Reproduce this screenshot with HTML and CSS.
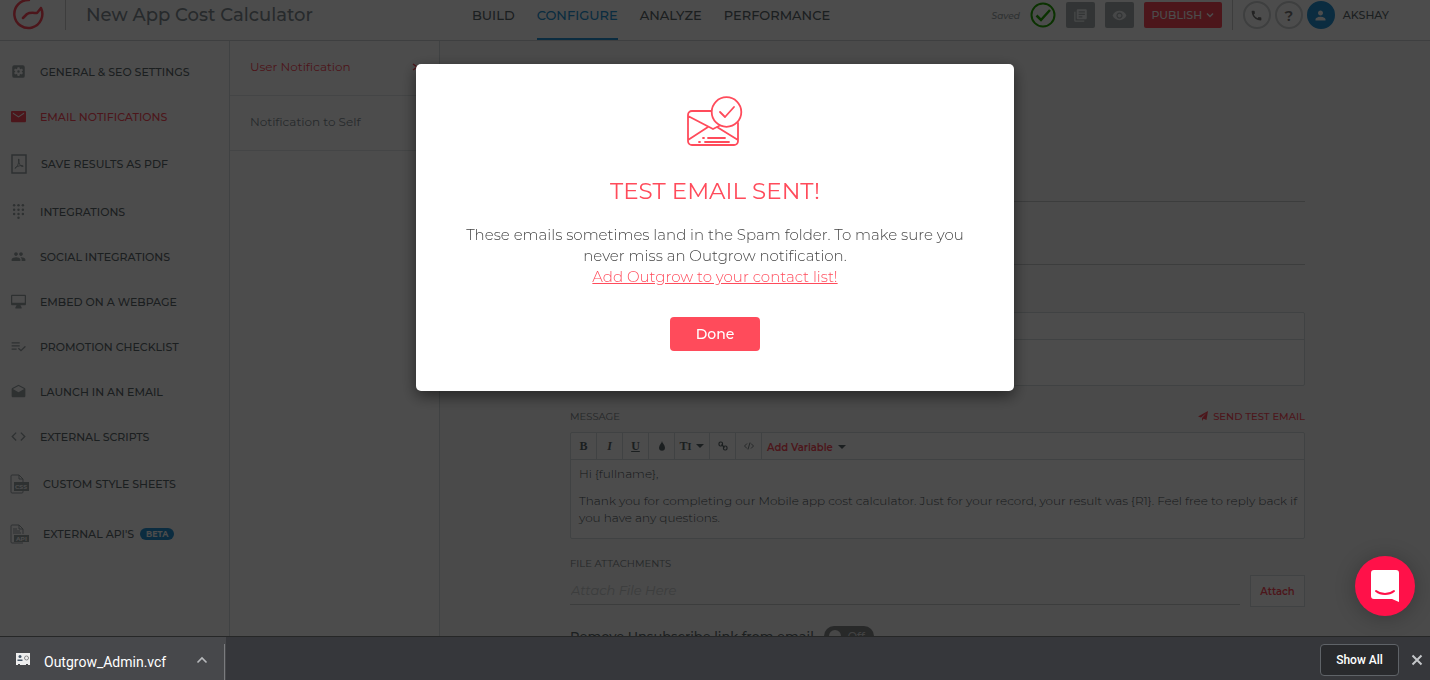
FILE: index.html
```html
<!DOCTYPE html>
<html lang="en">
<head>
  <meta charset="UTF-8">
  <title>New App Cost Calculator</title>
  <meta name="viewport" content="width=device-width, initial-scale=1">
  <link rel="stylesheet" href="styles.css">
</head>
<body>
  <div class="app">
    <header class="header">
      <div class="brand">
        <svg class="logo" viewBox="0 0 32 32" fill="none" stroke="#ff4b5b" stroke-width="2.500" stroke-linecap="round" stroke-linejoin="round">
          <path d="M16 1A14 14 0 1 0 28 9L24 14C21 14 17 13 14 15L10 19"/>
        </svg>
        <span class="project-name">New App Cost Calculator</span>
      </div>
      <nav class="tabs">
        <a href="#">BUILD</a>
        <a href="#" class="active">CONFIGURE</a>
        <a href="#">ANALYZE</a>
        <a href="#">PERFORMANCE</a>
      </nav>
      <div class="actions">
        <span class="saved">Saved</span>
        <svg class="saved-check" viewBox="0 0 26 26" fill="none" stroke="#26a806" stroke-width="2">
          <circle cx="13" cy="13" r="11.5"/>
          <path d="M6.500 13.500l4.500 4.500 9-10" stroke-width="2.500"/>
        </svg>
        <button class="square-btn" aria-label="Copy">
          <svg viewBox="0 0 24 24"><path d="M4 6H2v14c0 1.100.9 2 2 2h14v-2H4V6zm16-4H8c-1.100 0-2 .9-2 2v12c0 1.100.9 2 2 2h12c1.100 0 2-.9 2-2V4c0-1.100-.9-2-2-2zm-1 9H9V9h10v2zm-4 4H9v-2h6v2zm4-8H9V5h10v2z"/></svg>
        </button>
        <button class="square-btn" aria-label="Preview">
          <svg viewBox="0 0 24 24"><path d="M12 4.500C7 4.500 2.730 7.610 1 12c1.730 4.390 6 7.500 11 7.500s9.270-3.110 11-7.500c-1.730-4.390-6-7.500-11-7.500zM12 17c-2.760 0-5-2.240-5-5s2.240-5 5-5 5 2.240 5 5-2.240 5-5 5zm0-8c-1.660 0-3 1.340-3 3s1.340 3 3 3 3-1.340 3-3-1.340-3-3-3z"/></svg>
        </button>
        <button class="publish-btn">PUBLISH
          <svg viewBox="0 0 8 8" fill="none" stroke="currentColor" stroke-width="1.500"><path d="M1 2.500l3 3 3-3"/></svg>
        </button>
        <span class="divider"></span>
        <button class="round-btn" aria-label="Call">
          <svg viewBox="0 0 24 24"><path d="M20 15.400c-1.200 0-2.400-.2-3.500-.6-.4-.1-.7 0-1 .2L13.900 17c-2.800-1.300-5.500-3.900-6.900-6.800l2-1.700c.2-.2.300-.6.200-1C8.800 6.400 8.600 5.200 8.600 4c0-.5-.4-1-1-1H4.200C3.600 3 3 3.200 3 4c0 9.300 7.700 17 17 17 .7 0 1-.6 1-1.200v-3.400c0-.6-.4-1-1-1z"/></svg>
        </button>
        <button class="round-btn">?</button>
        <span class="avatar">
          <svg viewBox="0 0 24 24"><path d="M12 12c2.210 0 4-1.790 4-4s-1.790-4-4-4-4 1.790-4 4 1.790 4 4 4zm0 2c-2.670 0-8 1.340-8 4v2h16v-2c0-2.660-5.330-4-8-4z"/></svg>
        </span>
        <span class="user-name">AKSHAY</span>
      </div>
    </header>

    <div class="main">
      <nav class="sidebar">
        <a href="#" class="menu-item">
          <svg viewBox="0 0 24 24"><path fill-rule="evenodd" d="M5 2h14a3 3 0 0 1 3 3v14a3 3 0 0 1-3 3H5a3 3 0 0 1-3-3V5a3 3 0 0 1 3-3zm5.500 3l-.4 2.300-1.500.9-2.200-.9-1.600 2.700 1.900 1.400v1.300l-1.900 1.400 1.600 2.700 2.200-.9 1.500.9.400 2.300h3l.4-2.300 1.500-.9 2.200.9 1.600-2.700-1.900-1.400v-1.300l1.900-1.400-1.600-2.700-2.200.9-1.500-.9-.4-2.300zM12 10a2 2 0 1 1 0 4 2 2 0 0 1 0-4z"/></svg>
          <span>GENERAL &amp; SEO SETTINGS</span>
        </a>
        <a href="#" class="menu-item active">
          <svg viewBox="0 0 24 24"><path d="M22 3H2C.9 3 0 3.900 0 5v14c0 1.100.9 2 2 2h20c1.100 0 2-.9 2-2V5c0-1.100-.9-2-2-2zm-1 4.500l-9 6-9-6V5.500l9 6 9-6z"/></svg>
          <span>EMAIL NOTIFICATIONS</span>
        </a>
        <a href="#" class="menu-item tall">
          <svg class="doc" viewBox="0 0 16 20"><path class="outline" d="M1 1h14v18H1z" stroke-width="1.500"/><path class="outline" d="M7.500 5c1.500 0 0 4.500-1 6.500S3.500 15 4 14s4-2.500 7-2.500c2 0 1.500 1.500 0 1S8 9.500 7.500 7V5z"/></svg>
          <span>SAVE RESULTS AS PDF</span>
        </a>
        <a href="#" class="menu-item">
          <svg viewBox="0 0 24 24"><g><circle cx="5" cy="2" r="2"/><circle cx="12" cy="2" r="2"/><circle cx="19" cy="2" r="2"/><circle cx="5" cy="9" r="2"/><circle cx="12" cy="9" r="2"/><circle cx="19" cy="9" r="2"/><circle cx="5" cy="16" r="2"/><circle cx="12" cy="16" r="2"/><circle cx="19" cy="16" r="2"/><circle cx="12" cy="22" r="2"/></g></svg>
          <span>INTEGRATIONS</span>
        </a>
        <a href="#" class="menu-item">
          <svg viewBox="0 0 24 24"><path d="M16 11c1.660 0 3-1.340 3-3s-1.340-3-3-3-3 1.340-3 3 1.340 3 3 3zm-8 0c1.660 0 3-1.340 3-3S9.660 5 8 5 5 6.340 5 8s1.340 3 3 3zm0 2c-2.330 0-7 1.170-7 3.500V19h14v-2.500c0-2.330-4.670-3.500-7-3.500zm8 0c-.3 0-.6 0-1 .1 1.200.8 2 1.900 2 3.400V19h6v-2.500c0-2.330-4.670-3.500-7-3.500z"/></svg>
          <span>SOCIAL INTEGRATIONS</span>
        </a>
        <a href="#" class="menu-item">
          <svg viewBox="0 0 24 24"><path fill-rule="evenodd" d="M22 1H2C.9 1 0 1.900 0 3v13c0 1.100.9 2 2 2h7l-2 3v2h10v-2l-2-3h7c1.100 0 2-.9 2-2V3c0-1.100-.9-2-2-2zm0 13H2V3h20z"/></svg>
          <span>EMBED ON A WEBPAGE</span>
        </a>
        <a href="#" class="menu-item">
          <svg viewBox="0 0 24 24"><path d="M14 10H1v2h13v-2zm0-5H1v2h13V5zM1 17h8v-2H1v2zm21-6l2 1.500-8 7.500-5-4.500 1.500-1.500 3.500 3z"/></svg>
          <span>PROMOTION CHECKLIST</span>
        </a>
        <a href="#" class="menu-item">
          <svg viewBox="0 0 24 24"><path fill-rule="evenodd" d="M23 8c0-.7-.4-1.400-1-1.700L12 1 2 6.300C1.400 6.700 1 7.300 1 8v11c0 1.100.9 2 2 2h18c1.100 0 2-.9 2-2zM12 13L3 8l9-5 9 5z"/></svg>
          <span>LAUNCH IN AN EMAIL</span>
        </a>
        <a href="#" class="menu-item">
          <svg viewBox="0 0 24 24"><path d="M9 17.500L3.500 12 9 6.500 7.500 5l-7 7 7 7zM15 17.500l5.500-5.500L15 6.500 16.500 5l7 7-7 7z"/></svg>
          <span>EXTERNAL SCRIPTS</span>
        </a>
        <a href="#" class="menu-item tall file">
          <svg viewBox="0 0 19 20"><path class="outline" d="M13 5v13a1 1 0 0 1-1 1H2a1 1 0 0 1-1-1V2a1 1 0 0 1 1-1h7l4 4H9V1"/><path d="M4 8h15v9H4z"/><text x="5" y="15" class="tag">CSS</text></svg>
          <span>CUSTOM STYLE SHEETS</span>
        </a>
        <a href="#" class="menu-item tall file">
          <svg viewBox="0 0 19 20"><path class="outline" d="M13 10V5L9 1H2a1 1 0 0 0-1 1v16a1 1 0 0 0 1 1h11M9 1v4h4M3 5h4M3 7h7M3 9h8"/><path d="M4 11h15v7H4z"/><text x="6" y="17" class="tag">API</text></svg>
          <span>EXTERNAL API'S</span>
          <span class="badge">BETA</span>
        </a>
      </nav>

      <nav class="submenu">
        <a href="#" class="active">User Notification
          <svg viewBox="0 0 8 8" fill="none" stroke="currentColor" stroke-width="1.500"><path d="M2 1l4 3-4 3"/></svg>
        </a>
        <a href="#">Notification to Self</a>
      </nav>

      <main class="content">
        <input class="line-input" type="text" aria-label="Name">
        <input class="line-input second" type="text" aria-label="Email">
        <div class="editor subject">
          <div class="toolbar"></div>
          <div class="editor-body"></div>
        </div>

        <div class="label-row">
          <span class="label">MESSAGE</span>
          <a href="#" class="send-test">
            <svg viewBox="0 0 10 10"><path d="M10 0L8.500 9 5.500 7.700 4 10V7L8.500 2 3 6.500 0 5.500z"/></svg>
            SEND TEST EMAIL
          </a>
        </div>
        <div class="editor">
          <div class="toolbar">
            <button class="serif bold">B</button>
            <button class="serif italic">I</button>
            <button class="serif underline">U</button>
            <button aria-label="Text color"><svg viewBox="0 0 10 10"><path d="M5 0C5 2 8 4 8 6.800A3 3 0 0 1 2 6.800C2 4 5 2 5 0z"/></svg></button>
            <button class="serif size">T<small>I</small><i class="caret"></i></button>
            <button aria-label="Link"><svg viewBox="0 0 10 10" fill="none" stroke="#5d686c" stroke-width="1.200"><rect x="1" y="1" width="3.5" height="4" rx="1.500"/><rect x="5.5" y="5" width="3.5" height="4" rx="1.500"/><path d="M3.500 3.500l3 3"/></svg></button>
            <button aria-label="Code"><svg viewBox="0 0 10 10" fill="none" stroke="#5d686c" stroke-width=".8"><path d="M3 2.500L.5 5 3 7.500M7 2.500L9.500 5 7 7.500M6 1.500l-2 7"/></svg></button>
            <button class="variable">Add Variable <i class="caret"></i></button>
          </div>
          <div class="editor-body">
            <p>Hi {fullname},</p>
            <p>Thank you for completing our Mobile app cost calculator. Just for your record, your result was {R1}. Feel free to reply back if you have any questions.</p>
          </div>
        </div>

        <label class="label file-label" for="attachment">FILE ATTACHMENTS</label>
        <div class="attach-row">
          <input id="attachment" type="text" placeholder="Attach File Here">
          <button class="attach-btn">Attach</button>
        </div>
        <label class="unsubscribe">
          <span>Remove Unsubscribe link from email</span>
          <input type="checkbox">
          <span class="toggle"><i></i>Off</span>
        </label>
      </main>
    </div>
  </div>

  <div class="overlay">
    <div class="modal" role="dialog" aria-labelledby="modalTitle">
      <svg class="modal-icon" viewBox="0 0 56 51" fill="none" stroke="#ff4b5b" stroke-width="1.800" stroke-linecap="round" stroke-linejoin="round">
        <path d="M24 15H5a4 4 0 0 0-4 4v26a4 4 0 0 0 4 4h42a4 4 0 0 0 4-4V27M1 20l25 13 6-3M1 44l20-13M51 44L30 31"/>
        <circle cx="39.500" cy="16" r="14.800"/>
        <path d="M33 16l5 5 9-10M16 42h1M21 42h17M12 46h1M18 46h24"/>
      </svg>
      <h1 id="modalTitle">TEST EMAIL SENT!</h1>
      <p>These emails sometimes land in the Spam folder. To make sure you<br>never miss an Outgrow notification.<br><a href="#">Add Outgrow to your contact list!</a></p>
      <button class="done-btn">Done</button>
    </div>
  </div>

  <button class="launcher" aria-label="Open chat">
    <svg viewBox="0 0 28 32"><path d="M3 0h22a3 3 0 0 1 3 3v29l-7-3H3a3 3 0 0 1-3-3V3a3 3 0 0 1 3-3z" fill="#fff"/><path d="M5 21c5 4 13 4 18 0" fill="none" stroke="#ff1149" stroke-width="2" stroke-linecap="round"/></svg>
  </button>

  <footer class="downloads">
    <div class="download-item">
      <svg class="vcf" viewBox="0 0 14 12"><path d="M0 0h14v12h-2v-1h-2v1H4v-1H2v1H0z" fill="#eee"/><circle cx="4" cy="3.500" r="1.500" fill="#456"/><path d="M1.500 8V6.500h5V8z" fill="#456"/><circle cx="10.500" cy="5" r="2" fill="none" stroke="#888"/></svg>
      <span>Outgrow_Admin.vcf</span>
      <button aria-label="More"><svg viewBox="0 0 12 12" fill="none" stroke="#b8babd" stroke-width="1.600"><path d="M1.500 8.500L6 4l4.500 4.500"/></svg></button>
    </div>
    <button class="show-all">Show All</button>
    <button class="close" aria-label="Close"><svg viewBox="0 0 12 12" fill="none" stroke="#c4c6c9" stroke-width="2"><path d="M1.500 1.500l9 9M10.500 1.500l-9 9"/></svg></button>
  </footer>
</body>
</html>
```
FILE: styles.css
```css
:root {
  --primary: #ff4b5b;
  --blue: #2593d5;
  --text: #5d686c;
  --icon: #9aa3a6;
  --border: #d5dddf;
}
* {
  box-sizing: border-box;
}
body {
  margin: 0;
  font-family: Montserrat, Inter, sans-serif;
  font-size: 12px;
  color: var(--text);
}
button {
  font-family: inherit;
  padding: 0;
  border: none;
  background: none;
  cursor: pointer;
}
a {
  color: inherit;
  text-decoration: none;
}
svg {
  display: block;
  flex: none;
}
.app {
  height: 100vh;
  overflow: hidden;
  display: flex;
  flex-direction: column;
}

/* header */
.header {
  flex: none;
  display: flex;
  height: 41px;
  padding-bottom: 10px;
  background: #fff;
  border-bottom: 1px solid #cfd4d6;
}
.brand {
  width: 472px;
  display: flex;
  align-items: center;
  padding-left: 13px;
}
.logo {
  width: 32px;
  height: 32px;
}
.project-name {
  margin-left: 20px;
  padding-left: 20px;
  border-left: 1px solid #ccc;
  font-size: 18px;
  font-weight: 500;
  line-height: 30px;
  color: #848e93;
}
.tabs {
  display: flex;
  gap: 22px;
}
.tabs a {
  height: 40px;
  line-height: 31px;
  font-size: 13px;
  font-weight: 500;
}
.tabs a.active {
  color: var(--blue);
  border-bottom: 2px solid var(--blue);
}
.actions {
  margin-left: auto;
  padding-right: 41px;
  display: flex;
  align-items: center;
  gap: 10px;
}
.saved {
  font-size: 9px;
  font-style: italic;
  font-weight: 500;
  color: var(--icon);
}
.saved-check {
  width: 26px;
  height: 26px;
}
.square-btn {
  width: 29px;
  height: 26px;
  display: flex;
  align-items: center;
  justify-content: center;
  background: #a9afb2;
  border-radius: 2px;
}
.square-btn svg {
  width: 15px;
  height: 15px;
  fill: #eceff0;
}
.publish-btn {
  width: 78px;
  height: 26px;
  display: flex;
  align-items: center;
  justify-content: center;
  gap: 4px;
  background: var(--primary);
  border-radius: 2px;
  color: #fff;
  font-size: 11px;
  font-weight: 500;
}
.publish-btn svg {
  width: 8px;
  height: 8px;
}
.divider {
  width: 1px;
  height: 30px;
  background: #ccc;
}
.round-btn,
.avatar {
  width: 28px;
  height: 28px;
  display: flex;
  align-items: center;
  justify-content: center;
  border: 2px solid #cfd2d4;
  border-radius: 50%;
  color: #777;
  font-size: 15px;
  font-weight: 600;
}
.round-btn + .round-btn,
.avatar {
  margin-left: -6px;
}
.avatar {
  border-color: var(--blue);
  background: var(--blue);
}
.round-btn svg {
  width: 13px;
  height: 13px;
  fill: #777;
}
.avatar svg {
  width: 15px;
  height: 15px;
  fill: #fff;
}
.user-name {
  margin-left: -2px;
  font-size: 11px;
  font-weight: 500;
}

/* left menus */
.main {
  flex: 1;
  min-height: 0;
  display: flex;
}
.sidebar {
  width: 230px;
  flex: none;
  padding-top: 8px;
  background: #fff;
  border-right: 1px solid var(--border);
}
.menu-item {
  height: 45px;
  display: flex;
  align-items: center;
  gap: 14px;
  padding-left: 11px;
  font-size: 11px;
  font-weight: 500;
}
.menu-item.tall {
  height: 50px;
}
.menu-item svg {
  width: 15px;
  height: 15px;
  fill: var(--icon);
}
.menu-item svg.doc {
  width: 16px;
  height: 20px;
}
.menu-item.file {
  padding-left: 10px;
}
.menu-item.file svg {
  width: 19px;
  height: 20px;
}
.menu-item .outline {
  fill: none;
  stroke: var(--icon);
}
.menu-item .tag {
  font-size: 6px;
  font-weight: 700;
  fill: #fff;
}
.menu-item.active,
.submenu .active {
  color: var(--primary);
}
.menu-item.active svg {
  fill: var(--primary);
}
.badge {
  margin-left: -8px;
  padding: 0 6px;
  border-radius: 6px;
  background: var(--blue);
  color: #fff;
  font-size: 8px;
  font-weight: 700;
  line-height: 12px;
}
.submenu {
  width: 210px;
  flex: none;
  background: #fff;
  border-right: 1px solid var(--border);
}
.submenu a {
  height: 55px;
  display: flex;
  align-items: center;
  justify-content: space-between;
  padding: 0 20px 3px;
  border-bottom: 1px solid #e3e8ea;
  color: #848e93;
}
.submenu svg {
  width: 8px;
  height: 8px;
}

/* form */
.content {
  flex: 1;
  padding: 120px 125px 0 130px;
  background: #f7f7f7;
}
.line-input {
  display: block;
  width: 100%;
  height: 41px;
  border: none;
  border-bottom: 1px solid #c8cccd;
  background: none;
}
.line-input.second {
  margin-top: 22px;
}
.editor {
  border: 1px solid var(--border);
  border-radius: 2px;
  background: #fff;
}
.editor.subject {
  height: 74px;
  margin-top: 47px;
}
.toolbar {
  display: flex;
  height: 27px;
  border-bottom: 1px solid var(--border);
}
.toolbar button {
  width: 26px;
  display: flex;
  align-items: center;
  justify-content: center;
  border-right: 1px solid var(--border);
  color: var(--text);
}
.toolbar svg {
  width: 10px;
  height: 10px;
  fill: var(--text);
}
.toolbar [aria-label="Link"] svg,
.toolbar [aria-label="Code"] svg {
  fill: none;
}
.toolbar .serif {
  font-family: "Liberation Serif", serif;
  font-size: 12px;
  font-weight: 700;
}
.toolbar .italic {
  font-style: italic;
}
.toolbar .underline {
  text-decoration: underline;
}
.toolbar .size {
  width: 35px;
}
.toolbar .variable {
  width: auto;
  padding: 2px 5px 0;
  border-right: none;
  color: var(--primary);
  font-size: 10px;
  font-weight: 600;
}
.caret {
  margin-left: 5px;
  border: 4px solid transparent;
  border-top-color: var(--text);
  border-bottom: none;
}
.editor-body {
  padding: 5px 4px 12px 8px;
  font-weight: 300;
  line-height: 17px;
  color: #4c565a;
}
.editor-body p {
  margin: 0 0 10px;
}
.editor-body p:last-child {
  margin-bottom: 0;
}
.label-row {
  display: flex;
  justify-content: space-between;
  align-items: center;
  height: 16px;
  margin: 22px 0 8px;
}
.label {
  font-size: 10px;
  color: #7d868a;
}
.send-test {
  display: flex;
  align-items: center;
  gap: 5px;
  color: var(--primary);
  font-size: 10px;
  font-weight: 500;
}
.send-test svg {
  width: 10px;
  height: 10px;
  fill: var(--primary);
}
.file-label {
  display: block;
  margin-top: 17px;
  line-height: 16px;
}
.attach-row {
  display: flex;
  gap: 10px;
  margin-top: 3px;
}
.attach-row input {
  flex: 1;
  height: 30px;
  padding: 0 1px;
  border: none;
  border-bottom: 1px solid #c8cccd;
  background: none;
  font: italic 13px Montserrat, Inter, sans-serif;
}
.attach-row input::placeholder {
  color: #c8cccd;
}
.attach-btn {
  width: 55px;
  height: 32px;
  background: #fff;
  border: 1px solid var(--border);
  color: var(--primary);
  font-size: 10px;
  font-weight: 600;
}
.unsubscribe {
  display: flex;
  align-items: center;
  gap: 10px;
  margin-top: 19px;
  font-size: 13px;
  font-weight: 500;
}
.unsubscribe input {
  position: absolute;
  opacity: 0;
}
.toggle {
  width: 50px;
  height: 20px;
  display: flex;
  align-items: center;
  gap: 7px;
  padding-left: 5px;
  border-radius: 10px;
  background: #85898b;
  color: #ddd;
  font-size: 11px;
}
.toggle i {
  width: 12px;
  height: 12px;
  border-radius: 50%;
  background: #eee;
}

/* modal */
.overlay {
  position: fixed;
  inset: 0;
  padding-top: 64px;
  background: rgba(0, 0, 0, 0.7);
}
.modal {
  max-width: 598px;
  margin: 0 auto;
  padding: 32px 20px 40px;
  display: flex;
  flex-direction: column;
  align-items: center;
  background: #fff;
  border-radius: 5px;
  box-shadow: 0 5px 15px rgba(0, 0, 0, 0.5);
  text-align: center;
}
.modal-icon {
  width: 56px;
  height: 51px;
}
.modal h1 {
  margin: 29px 0 18px;
  color: var(--primary);
  font-size: 23px;
  font-weight: 400;
  line-height: 30px;
}
.modal p {
  margin: 0;
  color: #444;
  font-size: 15px;
  font-weight: 300;
  line-height: 21px;
}
.modal p a {
  color: var(--primary);
  text-decoration: underline;
}
.done-btn {
  width: 90px;
  height: 34px;
  margin-top: 30px;
  border-radius: 4px;
  background: var(--primary);
  color: #fff;
  font-size: 14px;
  font-weight: 500;
}

/* chat launcher and download bar */
.launcher {
  position: fixed;
  right: 15px;
  bottom: 64px;
  width: 60px;
  height: 60px;
  display: flex;
  align-items: center;
  justify-content: center;
  border-radius: 50%;
  background: #ff1149;
  box-shadow: 0 2px 20px rgba(0, 0, 0, 0.25);
}
.launcher svg {
  width: 28px;
  height: 32px;
}
.downloads {
  position: fixed;
  left: 0;
  right: 0;
  bottom: 0;
  height: 44px;
  display: flex;
  align-items: center;
  padding-right: 7px;
  background: #36373b;
  border-top: 1px solid #262727;
  font-family: Roboto, sans-serif;
}
.download-item {
  width: 226px;
  height: 100%;
  display: flex;
  align-items: center;
  padding: 7px 1px 0 16px;
  background: #47484b;
  color: #fff;
  font-size: 14px;
}
.download-item .vcf {
  width: 14px;
  height: 12px;
  margin: 0 14px 6px 0;
}
.download-item button {
  height: 100%;
  margin-left: auto;
  padding: 0 16px 4px;
  border-right: 1px solid #7a7b7e;
}
.download-item button svg,
.close svg {
  width: 12px;
  height: 12px;
}
.show-all {
  width: 79px;
  height: 32px;
  margin-left: auto;
  margin-right: 12px;
  border: 1px solid #5f6368;
  border-radius: 4px;
  background: #292a2d;
  color: #fff;
  font-size: 12px;
  font-weight: 500;
}
.show-all,
.close {
  margin-top: 2px;
}
```
